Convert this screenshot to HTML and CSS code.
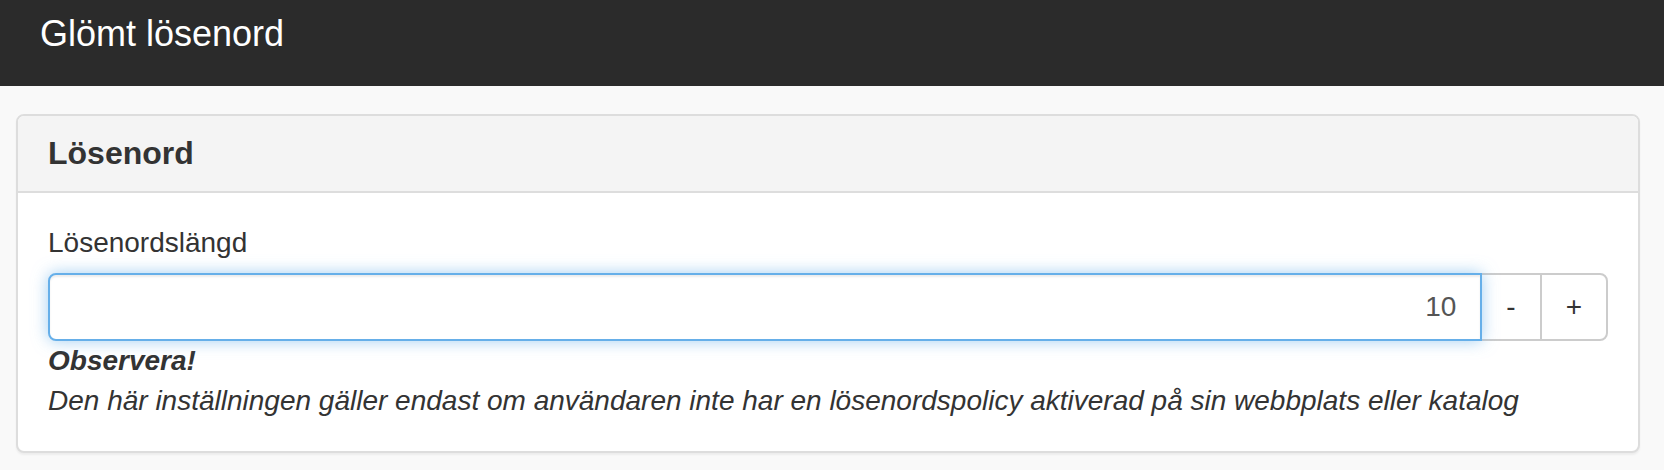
FILE: index.html
```html
<!DOCTYPE html>
<html lang="sv">
<head>
    <meta charset="UTF-8">
    <title>Glömt lösenord</title>
    <link rel="stylesheet" href="styles.css">
</head>
<body>
    <div class="topbar">
        <h1>Glömt lösenord</h1>
    </div>

    <div class="content">
        <div class="panel">
            <div class="panel-heading">
                <h3>Lösenord</h3>
            </div>
            <div class="panel-body">
                <label for="pwLength">Lösenordslängd</label>
                <div class="input-group">
                    <input type="text" id="pwLength" class="form-control" value="10">
                    <button class="btn">-</button>
                    <button class="btn">+</button>
                </div>
                <div class="help">
                    <strong>Observera!</strong>
                    <p>Den här inställningen gäller endast om användaren inte har en lösenordspolicy aktiverad på sin webbplats eller katalog</p>
                </div>
            </div>
        </div>
    </div>
</body>
</html>
```

FILE: styles.css
```css
* {
    margin: 0;
    padding: 0;
    box-sizing: border-box;
}

body {
    font-family: 'Liberation Sans', Arial, sans-serif;
    font-size: 28px;
    line-height: 40px;
    color: #333;
    background: #f9f9f9;
}

.topbar {
    height: 86px;
    background: #2b2b2b;
    padding: 14px 40px 0;
}

.topbar h1 {
    color: #fff;
    font-size: 36px;
    font-weight: normal;
    line-height: 1.1;
}

.content {
    padding: 28px 24px 18px 16px;
}

.panel {
    background: #fff;
    border: 2px solid #ddd;
    border-radius: 8px;
    box-shadow: 0 2px 2px rgba(0, 0, 0, 0.05);
}

.panel-heading {
    background: #f4f4f4;
    border-bottom: 2px solid #ddd;
    border-radius: 6px 6px 0 0;
    padding: 20px 30px;
}

.panel-heading h3 {
    font-size: 32px;
    font-weight: bold;
    line-height: 1.1;
}

.panel-body {
    padding: 30px;
}

label {
    display: block;
    margin-bottom: 10px;
}

.input-group {
    display: flex;
}

.form-control {
    flex: 1;
    height: 68px;
    padding: 12px 24px;
    font-family: inherit;
    font-size: 28px;
    color: #555;
    text-align: right;
    border: 2px solid #66afe9;
    border-radius: 8px 0 0 8px;
    outline: none;
    box-shadow: inset 0 2px 2px rgba(0, 0, 0, 0.075), 0 0 16px rgba(102, 175, 233, 0.6);
    position: relative;
    z-index: 2;
}

.btn {
    height: 68px;
    padding: 12px 24px;
    font-family: inherit;
    font-size: 28px;
    line-height: 40px;
    color: #333;
    background: #fff;
    border: 2px solid #ccc;
    margin-left: -2px;
    cursor: pointer;
}

.btn:last-child {
    border-radius: 0 8px 8px 0;
}

.help strong {
    display: block;
    font-style: italic;
}

.help p {
    font-style: italic;
}
```
